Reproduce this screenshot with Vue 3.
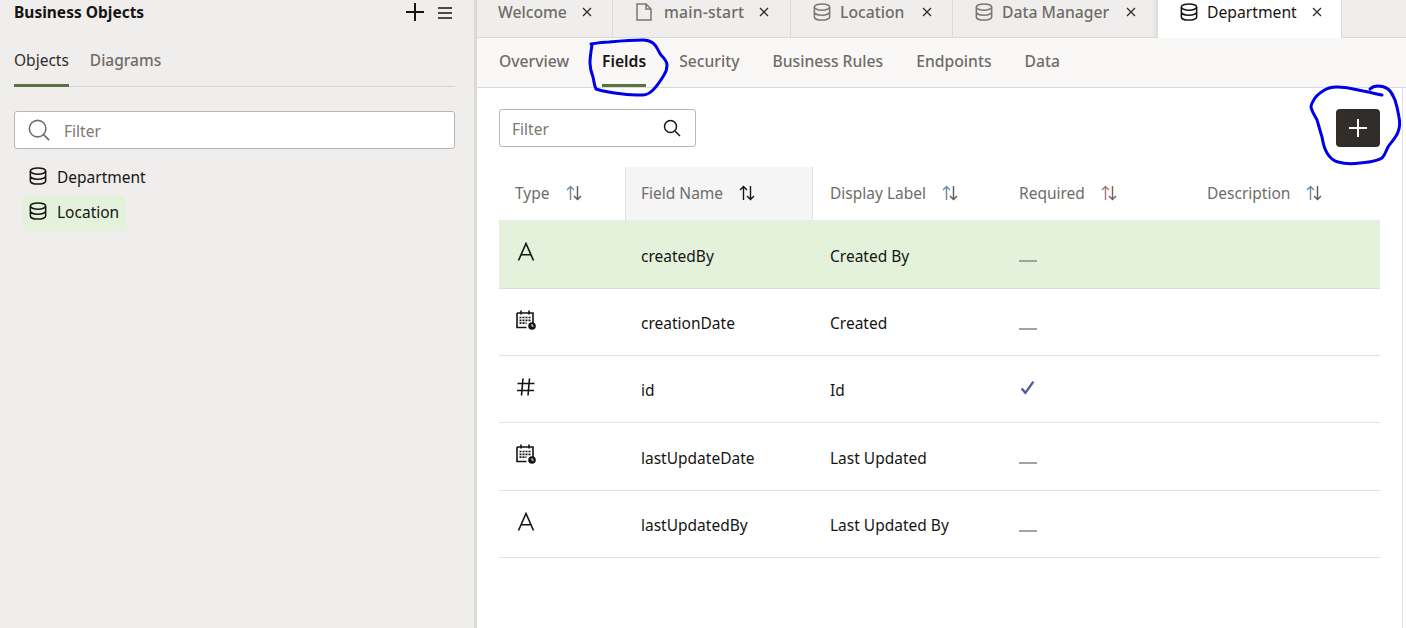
<script setup>
const sideItems = [
  { name: 'Department', active: false },
  { name: 'Location', active: true },
]
const tabs = [
  { name: 'Welcome', icon: '', cls: 't-welcome' },
  { name: 'main-start', icon: 'file', cls: 't-main' },
  { name: 'Location', icon: 'db', cls: 't-loc' },
  { name: 'Data Manager', icon: 'db', cls: 't-dm' },
  { name: 'Department', icon: 'db', cls: 't-dep active' },
]
const subtabs = ['Overview', 'Fields', 'Security', 'Business Rules', 'Endpoints', 'Data']
const columns = [
  { name: 'Type', cls: 'c-type' },
  { name: 'Field Name', cls: 'c-name sorted' },
  { name: 'Display Label', cls: 'c-label' },
  { name: 'Required', cls: 'c-req' },
  { name: 'Description', cls: 'c-desc' },
]
const rows = [
  { type: 'text', name: 'createdBy', label: 'Created By', req: false, h: 68, sel: true },
  { type: 'date', name: 'creationDate', label: 'Created', req: false, h: 67 },
  { type: 'num', name: 'id', label: 'Id', req: true, h: 67 },
  { type: 'date', name: 'lastUpdateDate', label: 'Last Updated', req: false, h: 68 },
  { type: 'text', name: 'lastUpdatedBy', label: 'Last Updated By', req: false, h: 67 },
]
</script>

<template>
  <div class="page">
    <aside class="side">
      <header class="side-head">
        <h1>Business Objects</h1>
        <svg class="side-plus" viewBox="0 0 20 20"><path d="M10 1v18M1 10h18" /></svg>
        <svg class="side-menu" viewBox="0 0 14 12"><path d="M0 1h14M0 6h14M0 11h14" /></svg>
      </header>
      <nav class="side-tabs">
        <span class="side-tab on">Objects</span>
        <span class="side-tab">Diagrams</span>
      </nav>
      <div class="side-filter">
        <svg class="lens-big" viewBox="0 0 24 24"><circle cx="10.5" cy="10.5" r="9" /><path d="M17 17l6 6" /></svg>
        <span>Filter</span>
      </div>
      <ul class="side-list">
        <li v-for="it in sideItems" :key="it.name" :class="{ on: it.active }">
          <svg class="db" viewBox="0 0 20 20"><ellipse cx="10" cy="4.5" rx="8.5" ry="3.5" /><path d="M1.5 4.5v11c0 2 3.8 3.5 8.5 3.5s8.5-1.5 8.5-3.5v-11M1.5 10c0 2 3.8 3.5 8.5 3.5s8.5-1.5 8.5-3.5" /></svg>
          <span>{{ it.name }}</span>
        </li>
      </ul>
    </aside>

    <main class="main">
      <div class="tabbar">
        <div v-for="t in tabs" :key="t.name" class="tab" :class="t.cls">
          <svg v-if="t.icon === 'db'" class="db" viewBox="0 0 20 20"><ellipse cx="10" cy="4.5" rx="8.5" ry="3.5" /><path d="M1.5 4.5v11c0 2 3.8 3.5 8.5 3.5s8.5-1.5 8.5-3.5v-11M1.5 10c0 2 3.8 3.5 8.5 3.5s8.5-1.5 8.5-3.5" /></svg>
          <svg v-else-if="t.icon === 'file'" class="file" viewBox="0 0 16 18"><path d="M1 1h9l5 5v11H1zM10 1v5h5" /></svg>
          <span class="tab-name">{{ t.name }}</span>
          <svg class="close" viewBox="0 0 10 10"><path d="M1 1l8 8M9 1l-8 8" /></svg>
        </div>
      </div>

      <nav class="subtabs">
        <span v-for="s in subtabs" :key="s" class="subtab" :class="{ on: s === 'Fields' }">{{ s }}</span>
      </nav>

      <section class="content">
        <div class="toolbar">
          <div class="filter">
            <span>Filter</span>
            <svg class="lens" viewBox="0 0 18 18"><circle cx="7.5" cy="7.5" r="6" /><path d="M12 12l5 5" /></svg>
          </div>
          <button class="add" type="button">
            <svg viewBox="0 0 20 20"><path d="M10 1v18M1 10h18" /></svg>
          </button>
        </div>

        <table class="grid">
          <thead>
            <tr>
              <th v-for="c in columns" :key="c.name" :class="c.cls">
                <span class="th-in">
                  <span>{{ c.name }}</span>
                  <svg class="sort" viewBox="0 0 16 16"><path class="up" d="M4.5 15V1.5M1 5l3.500-3.500L8 5" /><path class="down" d="M11.500 1v13.500M8 11l3.500 3.500L15 11" /></svg>
                </span>
              </th>
            </tr>
          </thead>
          <tbody>
            <tr v-for="r in rows" :key="r.name" :class="{ sel: r.sel }" :style="{ height: r.h + 'px' }">
              <td class="cell-type">
                <svg v-if="r.type === 'text'" class="ty" viewBox="0 0 20 20"><path d="M2.500 18.500L10 1.500l7.500 17M5.200 12.800h9.600" /></svg>
                <svg v-else-if="r.type === 'date'" class="ty" viewBox="0 0 20 20">
                  <path d="M1 3h16v10M10.500 17.500H1V3M5 .5v4M13 .5v4" />
                  <path class="dots" d="M3.500 7.500h11M3.500 10.300h11M3.500 13.100h7" />
                  <circle class="clock" cx="16" cy="16" r="3.800" />
                  <path class="hand" d="M16 14v2.200h1.600" />
                </svg>
                <svg v-else class="ty" viewBox="0 0 20 20"><path d="M7 1.500L5.500 18.500M13.500 1.500L12 18.500M1.500 6.500h17M1 13.500h17" /></svg>
              </td>
              <td class="cell">{{ r.name }}</td>
              <td class="cell">{{ r.label }}</td>
              <td class="cell">
                <svg v-if="r.req" class="check" viewBox="0 0 14 14"><path d="M1.500 8l3.500 4L12.500 1.500" /></svg>
                <span v-else class="dash"></span>
              </td>
              <td></td>
            </tr>
          </tbody>
        </table>
      </section>
    </main>

    <svg class="ink" viewBox="0 0 1406 628">
      <path d="M591 44C597 43 603 42 609 42C620 41 632 40 643 40C647 40 650 41 653 43C657 46 658 51 661 55C664 58 667 61 667 65C667 69 666 72 664 75C661 80 657 86 653 90C650 93 647 95 643 95C636 95 630 95 623 94C614 93 605 92 596 89C594 85 594 81 593 77C591 72 590 68 590 63C590 57 591 51 592 45" />
      <path d="M1382 95C1376 94 1369 92 1363 91C1354 89 1346 87 1337 87C1332 87 1327 88 1323 91C1320 93 1317 95 1315 98C1313 101 1311 104 1311 107C1312 112 1315 116 1317 120C1319 126 1320 131 1322 137C1323 143 1324 148 1327 153C1330 158 1333 161 1338 162C1345 164 1353 164 1360 163C1367 162 1376 162 1382 158C1385 155 1386 151 1388 147C1391 142 1396 138 1398 132C1400 127 1400 122 1399 117C1398 111 1397 106 1395 100C1393 96 1392 92 1388 89C1385 87 1382 86 1378 86C1375 86 1372 87 1370 89" />
    </svg>
  </div>
</template>

<style>
html, body { margin: 0; padding: 0; background: #fff; }
</style>

<style scoped>
.page {
  position: relative;
  display: flex;
  width: 1406px;
  height: 628px;
  overflow: hidden;
  font-family: "Noto Sans", "Open Sans", sans-serif;
  font-size: 15.5px;
  color: #161513;
  background: #fff;
}
svg { display: block; fill: none; }

/* left panel */
.side {
  flex: none;
  box-sizing: border-box;
  width: 477px;
  padding: 0 19px 0 14px;
  background: #f0eeec;
  border-right: 3px solid #dcdad8;
}
.side-head {
  display: flex;
  align-items: center;
  height: 25px;
}
.side-head h1 {
  margin: 0;
  flex: 1;
  font-size: 15.5px;
  font-weight: 700;
  line-height: 25px;
}
.side-plus { width: 20px; height: 20px; stroke: #161513; stroke-width: 2; margin-right: 13px; margin-top: -2px; }
.side-menu { width: 14px; height: 12px; stroke: #161513; stroke-width: 1.500; margin-right: 3px; }
.side-tabs {
  display: flex;
  gap: 21px;
  height: 62px;
  box-sizing: border-box;
  border-bottom: 1px solid #d8d6d4;
  padding-top: 22px;
}
.side-tab {
  font-weight: 500;
  color: #6f6c69;
  line-height: 26px;
  height: 39px;
  box-sizing: border-box;
}
.side-tab.on { color: #312d2a; font-weight: 400; border-bottom: 3px solid #5a7145; height: 40px; }
.side-filter {
  display: flex;
  align-items: center;
  height: 38px;
  box-sizing: border-box;
  margin-top: 24px;
  padding-left: 13px;
  background: #fff;
  border: 1px solid #b9b7b5;
  border-radius: 3px;
  color: #7b7876;
}
.side-filter span { padding-top: 2px; }
.lens-big { width: 22px; height: 22px; stroke: #6f6c69; stroke-width: 1.700; margin-right: 14px; }
.side-list { list-style: none; margin: 12px 0 0; padding: 0 0 0 9px; }
.side-list li {
  display: flex;
  align-items: center;
  width: fit-content;
  height: 35px;
  box-sizing: border-box;
  padding: 0 6px 3px 6px;
  gap: 10px;
}
.side-list li.on { background: #e4f2dc; }
.db { width: 18px; height: 18px; stroke: #161513; stroke-width: 1.700; margin-top: -2px; }

/* right panel */
.main { flex: 1; display: flex; flex-direction: column; min-width: 0; }
.tabbar {
  display: flex;
  height: 38px;
  box-sizing: border-box;
  background: #f0eeec;
  border-bottom: 1px solid #dcdad8;
  font-size: 15.7px;
}
.tab {
  display: flex;
  align-items: center;
  box-sizing: border-box;
  height: 37px;
  padding-bottom: 13px;
  border-right: 1px solid #dcdad8;
  color: #6f6c69;
  font-weight: 500;
}
.tab .db, .tab .file { stroke: #7a7774; margin-right: 9px; margin-top: 0; }
.file { width: 16px; height: 18px; stroke-width: 1.500; }
.tab-name { line-height: 22px; }
.close { width: 10px; height: 10px; stroke: #312d2a; stroke-width: 1.300; }
.t-welcome { width: 136px; padding-left: 21px; }
.t-welcome .close { margin-left: 15px; }
.t-main { width: 178px; padding-left: 23px; }
.t-main .tab-name { margin-left: 3px; letter-spacing: .2px; }
.t-main .close { margin-left: 15px; }
.t-loc { width: 162px; padding-left: 22px; }
.t-loc .close { margin-left: 18px; }
.t-dm { width: 204px; padding-left: 22px; box-shadow: inset -6px 0 6px -6px #cfcdcb; border-right: 0; }
.t-dm .close { margin-left: 17px; }
.t-dep {
  width: 185px;
  height: 38px;
  padding-left: 22px;
  padding-bottom: 15px;
  background: #fff;
  border-left: 1px solid #dcdad8;
  color: #161513;
  font-weight: 400;
}
.t-dep .db { stroke: #161513; }
.t-dep .close { margin-left: 15px; }

.subtabs {
  display: flex;
  gap: 33px;
  height: 50px;
  box-sizing: border-box;
  padding-left: 22px;
  background: #faf8f7;
  border-bottom: 1px solid #dcdad8;
  font-size: 15.7px;
}
.subtab {
  font-weight: 500;
  color: #6f6c69;
  line-height: 46px;
  height: 49px;
  box-sizing: border-box;
}
.subtab.on { color: #161513; font-weight: 600; border-bottom: 3px solid #5a7145; }

.content {
  flex: 1;
  box-sizing: border-box;
  padding: 0 22px;
  margin-right: 3px;
  border-right: 1px solid #e4e2e0;
}
.toolbar {
  display: flex;
  align-items: center;
  justify-content: space-between;
  height: 79px;
}
.filter {
  display: flex;
  align-items: center;
  justify-content: space-between;
  box-sizing: border-box;
  width: 197px;
  height: 38px;
  padding: 0 14px 0 12px;
  border: 1px solid #b9b7b5;
  border-radius: 3px;
  color: #7b7876;
}
.filter span { padding-top: 2px; }
.lens { width: 18px; height: 18px; stroke: #161513; stroke-width: 1.500; }
.add {
  display: flex;
  align-items: center;
  justify-content: center;
  width: 44px;
  height: 38px;
  padding: 0;
  border: 0;
  border-radius: 4px;
  background: #312d2a;
}
.add svg { width: 20px; height: 20px; stroke: #fff; stroke-width: 2; }

.grid {
  width: 881px;
  border-collapse: separate;
  border-spacing: 0;
  table-layout: fixed;
  color: #161513;
}
thead tr { height: 54px; }
th {
  padding: 0 0 2px 16px;
  font-weight: 400;
  text-align: left;
  color: #6f6c69;
  border-bottom: 1px solid #ecebe9;
  box-sizing: border-box;
}
.c-type { width: 126px; }
.c-name { width: 188px; padding-left: 15px; background: #f5f5f5; border-left: 1px solid #e4e2e0; border-right: 1px solid #e4e2e0; }
.c-label { width: 189px; padding-left: 17px; }
.c-req { width: 188px; padding-left: 17px; }
.c-desc { padding-left: 17px; }
.th-in { display: flex; align-items: center; gap: 16px; }
.sort { width: 16px; height: 16px; stroke-width: 1.400; }
.sort .up { stroke: #6b8aa0; }
.sort .down { stroke: #5a5a5a; }
.c-name .sort .up, .c-name .sort .down { stroke: #161513; }
.c-req .sort .up { stroke: #a67a72; }
.c-req .sort .down { stroke: #7d5a60; }

td {
  padding: 2px 0 0 16px;
  border-bottom: 1px solid #e4e2e0;
  vertical-align: middle;
  box-sizing: border-box;
}
td.cell:nth-child(3) { padding-left: 17px; }
td.cell:nth-child(4) { padding-left: 17px; }
tr.sel td { background: #e4f2dc; border-bottom-color: #d5e0cf; }
td.cell-type { padding-left: 17px; }
.ty { width: 20px; height: 20px; stroke: #161513; stroke-width: 1.600; margin-top: -7px; }
.ty .dots { stroke-dasharray: 2 1; stroke-width: 1.700; }
.ty .clock { fill: #161513; stroke: none; }
.ty .hand { stroke: #fff; stroke-width: 1; }
.dash { display: block; width: 18px; height: 0; border-top: 2px solid #a3a3a3; margin-top: 11px; }
.check { width: 15px; height: 15px; stroke: #4a5f97; stroke-width: 2.200; margin: -6px 0 0 1px; }

/* hand-drawn marker annotations over the screenshot */
.ink {
  position: absolute;
  inset: 0;
  width: 1406px;
  height: 628px;
  pointer-events: none;
}
.ink path {
  fill: none;
  stroke: #0000e6;
  stroke-width: 3;
  stroke-linecap: round;
  stroke-linejoin: round;
}
</style>
